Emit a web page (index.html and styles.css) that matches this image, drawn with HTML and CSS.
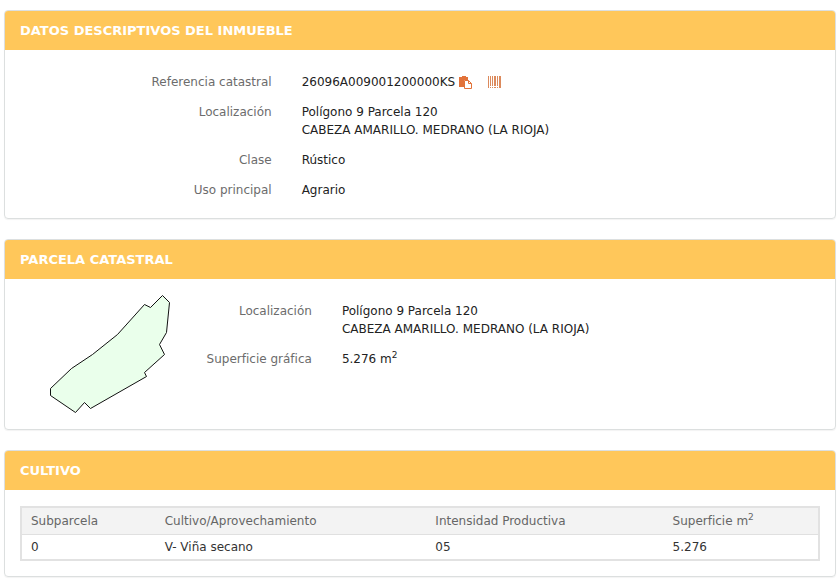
FILE: index.html
```html
<!DOCTYPE html>
<html lang="es">
<head>
  <meta charset="UTF-8" />
  <meta name="viewport" content="width=device-width, initial-scale=1.0" />
  <title>Datos descriptivos del inmueble</title>
  <link rel="stylesheet" href="styles.css">
</head>
<body>
  <section class="card">
    <h2 class="card-title">DATOS DESCRIPTIVOS DEL INMUEBLE</h2>
    <dl class="data-list">
      <dt>Referencia catastral</dt>
      <dd class="reference">
        <span>26096A009001200000KS</span>
        <button class="icon-btn" type="button" aria-label="Copiar referencia">
          <svg width="13" height="13" viewBox="0 0 13 13">
            <path d="M0 1h3V0h4v1h2v3H5v7H0z" fill="#e2733a"/>
            <path d="M5.500 4.500h4l3 3v5h-7z" fill="#fff" stroke="#e2733a"/>
            <path d="M9.500 4.500v3h3" fill="none" stroke="#e2733a"/>
          </svg>
        </button>
        <button class="icon-btn" type="button" aria-label="Código de barras">
          <svg width="13" height="13" viewBox="0 0 13 13">
            <g fill="#dc8a5c">
              <path d="M0 0h1v12H0zM2 0h1v10H2zM4 0h1v10H4zM6 0h2v10H6zM9 0h1v10H9zM11 0h2v12h-2z"/>
              <path d="M2 11h1v1H2zM4 11h1v1H4zM6 11h2v1H6zM9 11h1v1H9z"/>
            </g>
          </svg>
        </button>
      </dd>
      <dt>Localización</dt>
      <dd>Polígono 9 Parcela 120<br>CABEZA AMARILLO. MEDRANO (LA RIOJA)</dd>
      <dt>Clase</dt>
      <dd>Rústico</dd>
      <dt>Uso principal</dt>
      <dd>Agrario</dd>
    </dl>
  </section>

  <section class="card">
    <h2 class="card-title">PARCELA CATASTRAL</h2>
    <div class="parcel">
      <svg class="parcel-map" width="121" height="120" viewBox="0 0 121 120" role="img" aria-label="Plano de la parcela">
        <polygon points="0.5,94.5 0.5,101.5 25.5,118.5 34.5,108.5 40.5,114.5 96.5,82.5 94.5,78.5 114.5,60.5 109.5,50.5 116.5,38.5 119.5,8.5 112.5,1.5 100.5,13.5 94.5,10.5 67.5,40.5 42.5,60.5 21.5,74.5" fill="#eaffeb" stroke="#111" stroke-width="1"/>
      </svg>
      <dl class="data-list parcel-data">
        <dt>Localización</dt>
        <dd>Polígono 9 Parcela 120<br>CABEZA AMARILLO. MEDRANO (LA RIOJA)</dd>
        <dt>Superficie gráfica</dt>
        <dd>5.276 m<sup>2</sup></dd>
      </dl>
    </div>
  </section>

  <section class="card">
    <h2 class="card-title">CULTIVO</h2>
    <div class="table-wrap">
      <table>
        <thead>
          <tr>
            <th class="col-sub" scope="col">Subparcela</th>
            <th class="col-crop" scope="col">Cultivo/Aprovechamiento</th>
            <th class="col-int" scope="col">Intensidad Productiva</th>
            <th scope="col">Superficie m<sup>2</sup></th>
          </tr>
        </thead>
        <tbody>
          <tr>
            <td>0</td>
            <td>V- Viña secano</td>
            <td>05</td>
            <td>5.276</td>
          </tr>
        </tbody>
      </table>
    </div>
  </section>
</body>
</html>
```
FILE: styles.css
```css
* { margin: 0; padding: 0; box-sizing: border-box; }
body {
  font-family: Verdana, 'DejaVu Sans', sans-serif;
  font-size: 12px;
  line-height: 18px;
  color: #222;
  background: #fff;
  padding: 10px 2px 7px 4px;
  display: flex;
  flex-direction: column;
  gap: 20px;
}
.card {
  border: 1px solid #dcdfdf;
  border-radius: 4px;
  box-shadow: 0 1px 1px rgba(0,0,0,0.05);
  overflow: hidden;
}
.card-title {
  background: #ffc75a;
  color: #fff;
  font-size: 13px;
  font-weight: bold;
  line-height: 19px;
  padding: 10px 15px;
}
.data-list {
  display: grid;
  grid-template-columns: 1fr 2fr;
  gap: 12px 30px;
  padding: 23px 0 19px;
}
.data-list dt {
  color: #6c6c6c;
  text-align: right;
}
.reference {
  display: flex;
  align-items: center;
  gap: 4px;
}
.icon-btn {
  display: flex;
  background: none;
  border: none;
  cursor: pointer;
}
.icon-btn + .icon-btn {
  margin-left: 12px;
}
sup {
  font-size: 9px;
  line-height: 0;
}
.parcel {
  display: flex;
  align-items: flex-start;
  padding-left: 45px;
}
.parcel-map {
  flex: none;
  margin: 15px 0;
}
.parcel-data {
  flex: 1;
  grid-template-columns: 2fr 7fr;
}
.table-wrap {
  padding: 16px 15px 15px;
}
table {
  width: 100%;
  table-layout: fixed;
  border-collapse: separate;
  border-spacing: 0;
  border: 2px solid #e2e2e2;
}
th, td {
  padding: 4px 9px;
  text-align: left;
  font-weight: normal;
}
th {
  background: #f3f3f3;
  border-bottom: 1px solid #e0e0e0;
  color: #666;
}
td {
  color: #333;
  padding: 3px 9px;
}
.col-sub { width: 16.8%; }
.col-crop { width: 34%; }
.col-int { width: 29.8%; }
```
